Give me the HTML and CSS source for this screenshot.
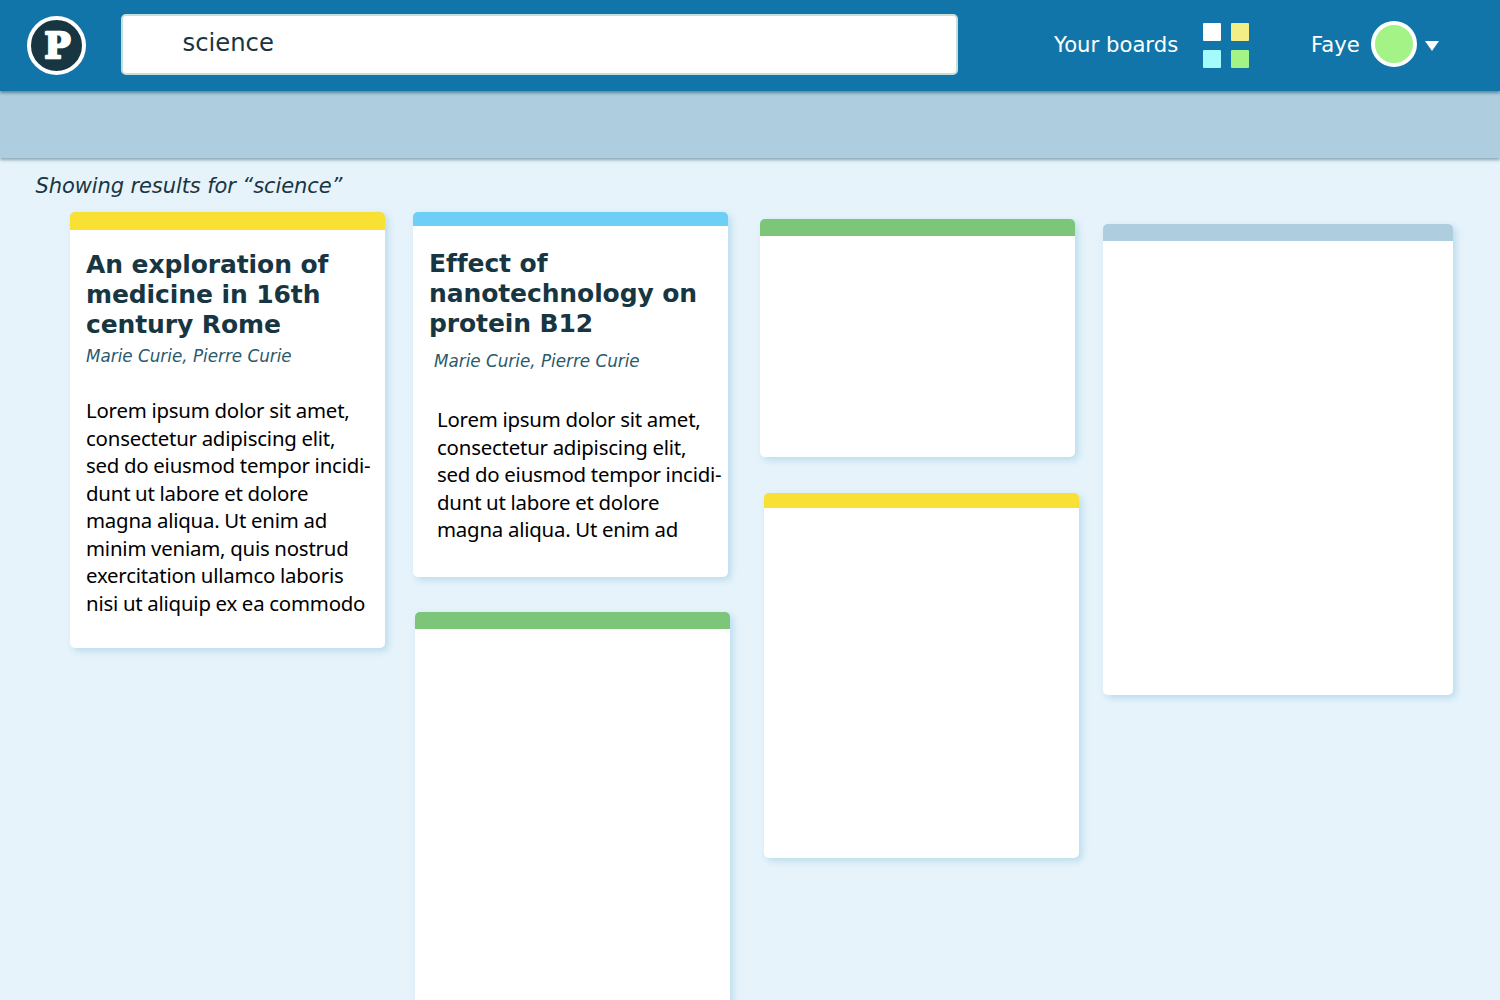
FILE: index.html
```html
<!DOCTYPE html>
<html lang="en">
<head>
<meta charset="utf-8">
<title>Search results</title>
<link rel="stylesheet" href="styles.css">
</head>
<body>
<header class="topbar">
  <a class="logo"><svg width="51" height="51" viewBox="0 0 51 51"><text class="logo-letter" x="13.4" y="38" textLength="26" lengthAdjust="spacingAndGlyphs">P</text></svg></a>
  <div class="search">science</div>
  <div class="boards">
    <span class="boards-label">Your boards</span>
    <div class="tiles">
      <i class="tile tile-white"></i><i class="tile tile-yellow"></i>
      <i class="tile tile-cyan"></i><i class="tile tile-green"></i>
    </div>
  </div>
  <div class="user">
    <span class="user-name">Faye</span>
    <i class="avatar"></i>
    <svg class="caret" width="14" height="10" viewBox="0 0 14 10"><path d="M0 0H14L7 10Z" fill="#fff"/></svg>
  </div>
</header>
<div class="subbar"></div>
<main>
  <p class="summary">Showing results for “science”</p>
  <div class="columns">
    <div class="column">
      <article class="card card-rome yellow">
        <h2 class="title">An exploration of<br>medicine in 16th<br>century Rome</h2>
        <p class="authors">Marie Curie, Pierre Curie</p>
        <p class="abstract">Lorem ipsum dolor sit amet,<br>consectetur adipiscing elit,<br>sed do eiusmod tempor incidi-<br>dunt ut labore et dolore<br>magna aliqua. Ut enim ad<br>minim veniam, quis nostrud<br>exercitation ullamco laboris<br>nisi ut aliquip ex ea commodo</p>
      </article>
    </div>
    <div class="column">
      <article class="card card-nano blue">
        <h2 class="title">Effect of<br>nanotechnology on<br>protein B12</h2>
        <p class="authors">Marie Curie, Pierre Curie</p>
        <p class="abstract">Lorem ipsum dolor sit amet,<br>consectetur adipiscing elit,<br>sed do eiusmod tempor incidi-<br>dunt ut labore et dolore<br>magna aliqua. Ut enim ad</p>
      </article>
      <article class="card card-tall green"></article>
    </div>
    <div class="column column-third">
      <article class="card card-short green"></article>
      <article class="card card-medium yellow"></article>
    </div>
    <div class="column column-wide">
      <article class="card card-wide slate"></article>
    </div>
  </div>
</main>
</body>
</html>
```
FILE: styles.css
```css
* { box-sizing: border-box; }
body {
  margin: 0;
  height: 1000px;
  overflow: hidden;
  background: #e6f3fb;
  color: #183642;
  font-family: "DejaVu Sans", Verdana, sans-serif;
}
h2, p { margin: 0; font-weight: normal; white-space: nowrap; }
.topbar {
  position: relative;
  display: flex;
  align-items: flex-start;
  height: 91px;
  padding-left: 27px;
  background: #1275a9;
  box-shadow: 0 2px 3px rgba(24, 74, 96, .55);
}
.logo {
  width: 59px;
  height: 59px;
  margin-top: 16px;
  border: 4px solid #fff;
  border-radius: 50%;
  background: #183642;
}
.logo svg { display: block; }
.logo-letter {
  fill: #fff;
  stroke: #fff;
  stroke-width: 2.5;
  stroke-linejoin: round;
  font: bold 35px "DejaVu Serif", serif;
}
.search {
  width: 837px;
  height: 61px;
  margin: 14px 0 0 35px;
  padding-left: 59.5px;
  border: 2px solid #c5e0d8;
  border-radius: 5px;
  background: #fff;
  font-size: 24.3px;
  line-height: 54px;
}
.boards { display: flex; margin-left: 96px; }
.boards-label, .user-name {
  color: #fff;
  font-size: 21.2px;
  line-height: 90px;
}
.boards-label { width: 149px; }
.tiles {
  display: grid;
  grid-template-columns: 18px 18px;
  grid-auto-rows: 18px;
  gap: 9px 10px;
  margin-top: 23px;
}
.tile { border-radius: 1px; }
.tile-white { background: #fff; }
.tile-yellow { background: #f4ee86; }
.tile-cyan { background: #a4fbfb; }
.tile-green { background: #a3f386; }
.user { display: flex; margin-left: 62px; }
.user-name { width: 60px; }
.avatar {
  width: 46px;
  height: 46px;
  margin-top: 21px;
  border: 4px solid #fff;
  border-radius: 50%;
  background: #a3f386;
}
.caret { margin: 41px 0 0 8px; }
.subbar {
  height: 67px;
  background: #aecee0;
  box-shadow: 0 2px 3px rgba(24, 74, 96, .45);
}
.summary {
  height: 54px;
  padding: 13px 0 0 35.5px;
  font-size: 21px;
  font-style: italic;
  letter-spacing: -.1px;
  line-height: 30px;
}
.columns { display: flex; gap: 28px; padding-left: 70px; }
.column { width: 315px; }
.column-third { margin: 7px 0 0 4px; }
.column-wide { width: 350px; margin-top: 12px; }
.card {
  border-top: 17px solid;
  border-radius: 5px;
  background: #fff;
  box-shadow: 3px 3px 7px rgba(70, 160, 200, .28);
}
.yellow { border-top-color: #f8e035; }
.blue { border-top-color: #6dcff6; }
.green { border-top-color: #7dc579; }
.slate { border-top-color: #aecee0; }
.card-rome { height: 436px; padding: 20px 0 0 16px; border-top-width: 18px; }
.card-nano { height: 365px; padding: 23px 0 0 16px; border-top-width: 14px; }
.card-tall { height: 420px; margin: 35px -2px 0 2px; }
.card-short { height: 238px; }
.card-medium { height: 365px; margin: 36px -4px 0 4px; border-top-width: 15px; }
.card-wide { height: 471px; }
.title {
  color: #183642;
  font-size: 25px;
  font-weight: bold;
  letter-spacing: -.1px;
  line-height: 30px;
}
.authors {
  margin-top: 4px;
  color: #2a5a6c;
  font-size: 16.8px;
  font-style: italic;
  line-height: 24px;
}
.abstract {
  margin-top: 29px;
  color: #000;
  font-family: "Noto Sans", sans-serif;
  font-size: 20.4px;
  letter-spacing: -.2px;
  word-spacing: -.3px;
  line-height: 27.5px;
}
.card-nano .authors { margin: 10px 0 0 5px; }
.card-nano .abstract { margin: 33px 0 0 8px; }
```
